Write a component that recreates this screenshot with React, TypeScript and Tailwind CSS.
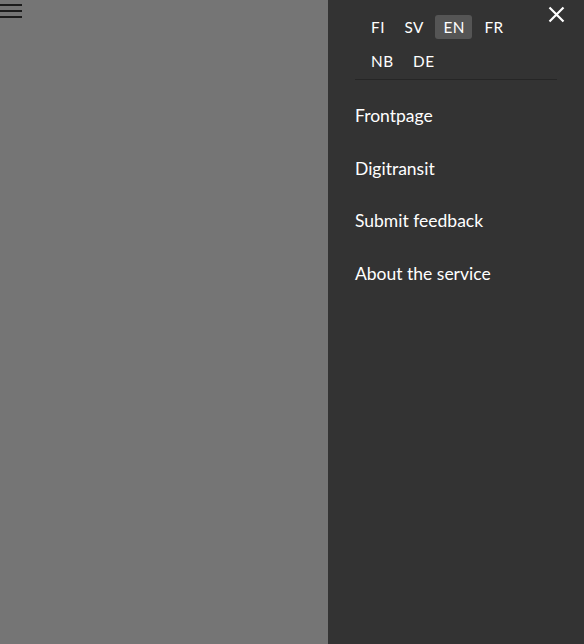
import React from "react";

const langs = ["FI", "SV", "EN", "FR", "NB", "DE"];
const items = ["Frontpage", "Digitransit", "Submit feedback", "About the service"];

export default function App() {
  return (
    <div
      className="flex w-[584px] h-[644px] overflow-hidden"
      style={{ fontFamily: "Lato, 'Noto Sans', sans-serif" }}
    >
      <div className="w-[328px] h-full bg-[#757575] relative">
        <div className="flex flex-col gap-[4px] pt-[4px] w-[22px]">
          <div className="h-[2px] bg-[#1c1c1c]" />
          <div className="h-[2px] bg-[#1c1c1c]" />
          <div className="h-[2px] bg-[#1c1c1c]" />
        </div>
      </div>
      <div className="flex-1 h-full bg-[#333333] relative pl-[27px] pr-[27px]">
        <button className="absolute right-[19px] top-[6px] w-[17px] h-[17px] text-white">
          <svg viewBox="0 0 17 17" width="17" height="17">
            <path d="M1.5 1.5 L15.5 15.5 M15.5 1.5 L1.5 15.5" stroke="white" strokeWidth="2.2" />
          </svg>
        </button>
        <div className="flex flex-wrap w-[175px] gap-x-[4px] gap-y-[10px] pt-[15px] pl-[8px] pb-[6px]">
          {langs.map((l) => (
            <div
              key={l}
              className={`h-[24px] leading-[24px] pl-[8px] pr-[7.5px] text-[15.3px] tracking-[0.5px] text-white rounded-[3px] ${
                l === "EN" ? "bg-[#555555]" : ""
              }`}
            >
              {l}
            </div>
          ))}
        </div>
        <div className="h-px bg-[#262626]" />
        <div className="flex flex-col pt-[10px]">
          {items.map((t) => (
            <div key={t} className="h-[52.5px] flex items-center text-[17.5px] leading-[20px] text-white">
              {t}
            </div>
          ))}
        </div>
      </div>
    </div>
  );
}
